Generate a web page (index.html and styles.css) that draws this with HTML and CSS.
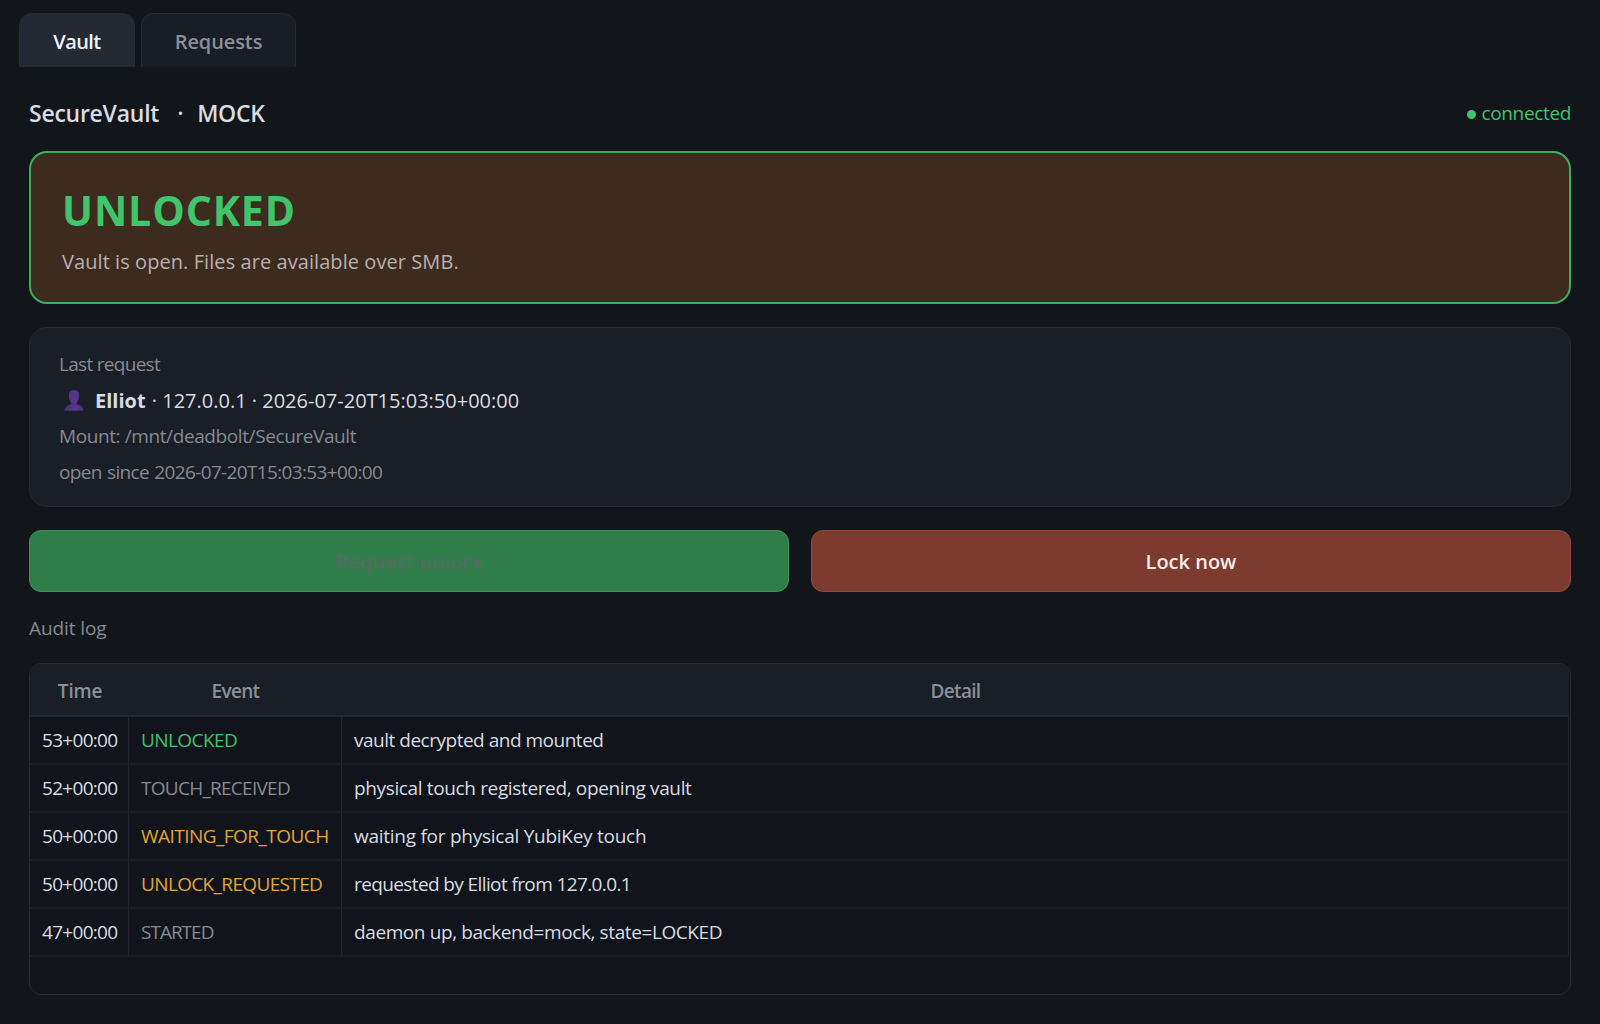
FILE: index.html
```html
<!DOCTYPE html>
<html lang="en">

<head>
  <meta charset="UTF-8">
  <meta name="viewport" content="width=device-width, initial-scale=1.0">
  <title>SecureVault</title>
  <link rel="stylesheet" href="styles.css">
</head>

<body>
  <nav class="tabs">
    <button class="tab active">Vault</button>
    <button class="tab requests">Requests</button>
  </nav>

  <main class="panel">
    <header class="title-row">
      <h1 class="title"><span class="vault-name">SecureVault</span><span class="sep">·</span><span class="backend">MOCK</span></h1>
      <div class="connection"><span class="dot"></span><span>connected</span></div>
    </header>

    <section class="state-card">
      <div class="state">UNLOCKED</div>
      <div class="state-hint">Vault is open. Files are available over SMB.</div>
    </section>

    <section class="info-card">
      <div class="muted last">Last request</div>
      <div class="requester">
        <svg class="user-icon" width="20" height="21" viewBox="0 0 20 21">
          <defs>
            <linearGradient id="bust" x1="0" y1="0" x2="1" y2="0">
              <stop offset="0" stop-color="#44306f" />
              <stop offset="0.55" stop-color="#5b3694" />
              <stop offset="1" stop-color="#4a2c7c" />
            </linearGradient>
          </defs>
          <path fill="url(#bust)" d="M10 0.2C6.2 0.2 4.6 2.3 4.8 5.6C5 9 5.8 11.3 7.2 12.6V14.3C4 15 1 16.6 0.3 20.7H19.7C19 16.6 16 15 12.8 14.3V12.6C14.2 11.3 15 9 15.2 5.6C15.4 2.3 13.8 0.2 10 0.2Z" />
          <path fill="#4c2e7e" d="M7.2 12.6Q10 14.2 12.8 12.6V14.3Q10 15.6 7.2 14.3Z" />
        </svg>
        <span class="who"><b>Elliot</b> · 127.0.0.1 · 2026-07-20T15:03:50+00:00</span>
      </div>
      <div class="muted mount">Mount: /mnt/deadbolt/SecureVault</div>
      <div class="muted since">open since 2026-07-20T15:03:53+00:00</div>
    </section>

    <div class="actions">
      <button class="btn unlock" disabled>Request unlock</button>
      <button class="btn lock">Lock now</button>
    </div>

    <div class="log-label">Audit log</div>
    <div class="log">
      <table>
        <thead>
          <tr>
            <th class="col-time">Time</th>
            <th class="col-event">Event</th>
            <th>Detail</th>
          </tr>
        </thead>
        <tbody>
          <tr class="row-unlocked">
            <td>53+00:00</td>
            <td class="event ok">UNLOCKED</td>
            <td class="detail">vault decrypted and mounted</td>
          </tr>
          <tr class="row-touch">
            <td>52+00:00</td>
            <td class="event">TOUCH_RECEIVED</td>
            <td class="detail">physical touch registered, opening vault</td>
          </tr>
          <tr class="row-waiting">
            <td>50+00:00</td>
            <td class="event warn">WAITING_FOR_TOUCH</td>
            <td class="detail">waiting for physical YubiKey touch</td>
          </tr>
          <tr class="row-requested">
            <td>50+00:00</td>
            <td class="event warn">UNLOCK_REQUESTED</td>
            <td class="detail">requested by Elliot from 127.0.0.1</td>
          </tr>
          <tr class="row-started">
            <td>47+00:00</td>
            <td class="event">STARTED</td>
            <td class="detail">daemon up, backend=mock, state=LOCKED</td>
          </tr>
        </tbody>
      </table>
    </div>
  </main>
</body>

</html>
```

FILE: styles.css
```css
* {
  box-sizing: border-box;
}

body {
  margin: 0;
  height: 100vh;
  overflow: hidden;
  display: flex;
  flex-direction: column;
  background: #12161a;
  color: #d9dce3;
  font-family: "Segoe UI", "Open Sans", "Noto Sans", sans-serif;
  font-size: 19px;
}

button {
  font-family: inherit;
}

.tabs {
  display: flex;
  gap: 6px;
  padding: 13px 19px 0;
}

.tab {
  width: 116px;
  height: 54px;
  padding: 2px 0 0;
  border: 1px solid #262b33;
  border-bottom: none;
  border-radius: 13px 13px 0 0;
  background: #191d25;
  color: #8b8f99;
  font-size: 20px;
  font-weight: 600;
  letter-spacing: -0.1px;
}

.tab.requests {
  width: 155px;
}

.tab.active {
  background: #232a33;
  color: #f0f3fa;
  letter-spacing: -0.6px;
}

.panel {
  flex: 1;
  display: flex;
  flex-direction: column;
  padding: 0 29px 29px;
}

.title-row {
  display: flex;
  justify-content: space-between;
  align-items: center;
  height: 84px;
  padding-top: 7px;
}

.title {
  display: flex;
  margin: 0;
  font-size: 23px;
  font-weight: 600;
  letter-spacing: -0.25px;
}

.sep {
  width: 38px;
  padding-left: 18px;
}

.connection {
  display: flex;
  align-items: center;
  gap: 5px;
  color: #40c46c;
  letter-spacing: -0.35px;
}

.dot {
  width: 9px;
  height: 9px;
  margin-top: 3px;
  border-radius: 50%;
  background: #40c46c;
}

.state-card {
  height: 153px;
  padding: 29px 31px;
  border: 2px solid #3cae62;
  border-radius: 18px;
  background: #3d2b1e;
}

.state {
  height: 56px;
  line-height: 56px;
  font-size: 41px;
  font-weight: 700;
  letter-spacing: 0.9px;
  color: #40c46c;
}

.state-hint {
  margin-top: 10px;
  line-height: 28px;
  font-size: 20px;
  letter-spacing: 0.07px;
  color: #b6b2b1;
}

.info-card {
  display: grid;
  grid-template-rows: repeat(4, 36px);
  align-items: center;
  height: 180px;
  margin-top: 23px;
  padding: 18px 29px;
  border: 1px solid #262b32;
  border-radius: 18px;
  background: #1a1e26;
}

.muted {
  color: #868a93;
}

.last {
  letter-spacing: -0.7px;
}

.mount {
  letter-spacing: -0.4px;
}

.since {
  letter-spacing: -0.65px;
  word-spacing: 1px;
}

.requester {
  display: flex;
  align-items: center;
  font-size: 20px;
}

.user-icon {
  margin: 0 11px 0 5px;
}

.who b {
  margin-right: 1px;
}

.actions {
  display: grid;
  grid-template-columns: 1fr 1fr;
  gap: 22px;
  margin-top: 23px;
}

.btn {
  height: 62px;
  padding: 1px 0 0;
  border-radius: 12px;
  font-size: 20px;
  font-weight: 600;
}

.unlock {
  border: 1px solid #43905c;
  background: #2f7e4a;
  color: #566865;
}

.lock {
  border: 1px solid #904b40;
  background: #7d3a2f;
  color: #f5ebe9;
}

.log-label {
  height: 71px;
  line-height: 72px;
  letter-spacing: -0.1px;
  color: #868a93;
}

.log {
  flex: 1;
  overflow: hidden;
  border: 1px solid #272c31;
  border-radius: 12px;
  background: #11141b;
}

table {
  width: 1539px;
  table-layout: fixed;
  border-collapse: separate;
  border-spacing: 0;
}

th {
  height: 53px;
  padding: 3px 0 0;
  border-bottom: 2px solid #23282f;
  background: #1a1e26;
  color: #8b8f99;
  font-weight: 600;
  letter-spacing: -0.7px;
}

.col-time {
  width: 99px;
  padding-left: 1px;
  letter-spacing: -0.2px;
}

.col-event {
  width: 213px;
}

td {
  height: 48px;
  padding: 0 0 1px 12px;
  border-right: 1px solid #22262c;
  border-bottom: 2px solid #1b1f24;
  letter-spacing: -0.7px;
  white-space: nowrap;
}

.event {
  color: #868a93;
}

.event.ok {
  color: #40c46c;
}

.event.warn {
  color: #e0a43b;
}

.row-unlocked .event {
  letter-spacing: -0.57px;
}

.row-unlocked .detail {
  letter-spacing: -0.49px;
}

.row-touch .event {
  letter-spacing: -0.73px;
}

.row-touch .detail {
  letter-spacing: -0.36px;
}

.row-waiting .event {
  letter-spacing: -0.54px;
}

.row-waiting .detail {
  letter-spacing: -0.26px;
}

.row-requested .event {
  letter-spacing: -0.64px;
}

.row-requested .detail {
  letter-spacing: -0.61px;
}

.row-started .event {
  letter-spacing: -1px;
}

.row-started .detail {
  letter-spacing: -0.4px;
}
```
